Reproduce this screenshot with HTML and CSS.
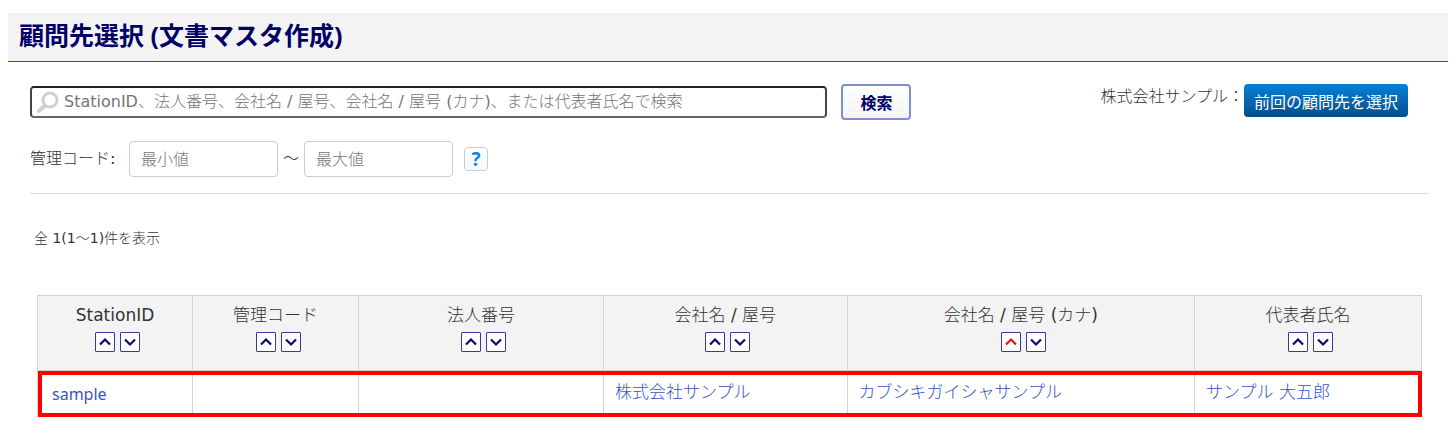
FILE: index.html
```
<!DOCTYPE html>
<html lang="ja">
<head>
<meta charset="utf-8">
<meta name="viewport" content="width=device-width, initial-scale=1">
<title>顧問先選択 (文書マスタ作成)</title>
<link rel="stylesheet" href="styles.css">
</head>
<body>
<svg class="defs" aria-hidden="true">
  <symbol id="up" viewBox="0 0 18 18"><path d="M4 11.5 9 6.5l5 5" fill="none" stroke="currentColor" stroke-width="2.2"/></symbol>
  <symbol id="down" viewBox="0 0 18 18"><path d="M4 6.5l5 5 5-5" fill="none" stroke="currentColor" stroke-width="2.2"/></symbol>
</svg>
<header class="page-header"><h1>顧問先選択 (文書マスタ作成)</h1></header>
<main class="content">
  <form class="filters">
    <div class="search-row">
      <div class="search-box">
        <svg class="search-icon" viewBox="0 0 22 22" aria-hidden="true"><path d="M8.5 14 2 20" fill="none" stroke="#d0d0d0" stroke-width="4" stroke-linecap="round"/><circle cx="13" cy="9" r="7" fill="#fff" stroke="#d0d0d0" stroke-width="3"/></svg>
        <input class="search-input" type="text" aria-label="検索条件" placeholder="StationID、法人番号、会社名 / 屋号、会社名 / 屋号 (カナ)、または代表者氏名で検索">
      </div>
      <button class="search-button" type="submit">検索</button>
      <div class="previous">
        <span>株式会社サンプル：</span>
        <button class="previous-button" type="button">前回の顧問先を選択</button>
      </div>
    </div>
    <div class="code-row">
      <label class="code-label" for="code-min">管理コード:</label>
      <input class="code-input" id="code-min" type="text" placeholder="最小値">
      <span class="tilde">～</span>
      <input class="code-input" type="text" aria-label="管理コード 最大値" placeholder="最大値">
      <button class="help-button" type="button">?</button>
    </div>
  </form>
  <p class="count">全 1(1～1)件を表示</p>
  <table class="clients">
    <colgroup><col class="col-id"><col class="col-code"><col class="col-number"><col class="col-name"><col class="col-kana"><col class="col-owner"></colgroup>
    <thead>
      <tr>
        <th scope="col">StationID<div class="sort"><button type="button" aria-label="昇順"><svg><use href="#up"/></svg></button><button type="button" aria-label="降順"><svg><use href="#down"/></svg></button></div></th>
        <th scope="col">管理コード<div class="sort"><button type="button" aria-label="昇順"><svg><use href="#up"/></svg></button><button type="button" aria-label="降順"><svg><use href="#down"/></svg></button></div></th>
        <th scope="col">法人番号<div class="sort"><button type="button" aria-label="昇順"><svg><use href="#up"/></svg></button><button type="button" aria-label="降順"><svg><use href="#down"/></svg></button></div></th>
        <th scope="col">会社名 / 屋号<div class="sort"><button type="button" aria-label="昇順"><svg><use href="#up"/></svg></button><button type="button" aria-label="降順"><svg><use href="#down"/></svg></button></div></th>
        <th scope="col">会社名 / 屋号 (カナ)<div class="sort"><button class="active" type="button" aria-label="昇順"><svg><use href="#up"/></svg></button><button type="button" aria-label="降順"><svg><use href="#down"/></svg></button></div></th>
        <th scope="col">代表者氏名<div class="sort"><button type="button" aria-label="昇順"><svg><use href="#up"/></svg></button><button type="button" aria-label="降順"><svg><use href="#down"/></svg></button></div></th>
      </tr>
    </thead>
    <tbody>
      <tr class="highlight">
        <td class="station-id"><a href="#">sample</a></td>
        <td></td>
        <td></td>
        <td><a href="#">株式会社サンプル</a></td>
        <td><a href="#">カブシキガイシャサンプル</a></td>
        <td><a href="#">サンプル 大五郎</a></td>
      </tr>
    </tbody>
  </table>
</main>
</body>
</html>
```
FILE: styles.css
```
* { box-sizing: border-box; }
body {
  margin: 0;
  padding: 13px 8px;
  background: #fff;
  color: #333;
  font: 400 16px/24px "DejaVu Sans", "Noto Sans CJK JP Light", "Noto Sans CJK JP", sans-serif;
}
button, input { font: inherit; margin: 0; }
.defs { display: none; }
.page-header {
  padding: 5px 11px 7px;
  background: #f3f3f3;
  border-bottom: 1px solid #4a4a9c;
}
h1 {
  margin: 0;
  color: #006;
  font-family: "Noto Sans", "Noto Sans CJK JP", sans-serif;
  font-size: 25px;
  line-height: 34px;
  padding-bottom: 2px;
  font-weight: 700;
}
.content { padding: 22px 19px 0 22px; }
.filters { padding-bottom: 16px; border-bottom: 1px solid #ddd; }
.search-row { display: flex; align-items: center; }
.search-box { display: grid; width: 57%; align-items: center; }
.search-box > * { grid-area: 1 / 1; }
.search-icon { width: 22px; height: 22px; margin-left: 7px; z-index: 1; pointer-events: none; }
.search-input {
  width: 100%;
  height: 32px;
  padding: 0 8px 2px 32px;
  border: 2px solid #444;
  border-bottom-color: #666;
  border-top-color: #222;
  border-radius: 4px;
  background: #fff;
}
input::placeholder { color: #757575; opacity: 1; }
.search-button {
  width: 70px;
  height: 36px;
  margin-left: 14px;
  padding: 0;
  border: 2px solid #7d8fd0;
  border-radius: 4px;
  background: linear-gradient(#fff, #f3f3f3);
  color: #006;
  font-family: "Noto Sans CJK JP", sans-serif;
  font-weight: 700;
}
.previous { display: flex; align-self: flex-start; margin-left: auto; margin-right: 21px; }
.previous span { padding-top: 1px; }
.previous-button {
  height: 33px;
  padding: 0 10px;
  border: 0;
  border-radius: 4px;
  background: linear-gradient(#0480d8, #034f88);
  color: #fff;
  font-family: "Noto Sans CJK JP", sans-serif;
}
.code-row { display: flex; align-items: center; margin-top: 21px; }
.code-label { width: 99px; }
.code-input {
  width: 149px;
  height: 36px;
  padding: 0 11px;
  border: 1px solid #ccc;
  border-radius: 4px;
  background: #fff;
}
.tilde { width: 26px; text-align: center; }
.help-button {
  width: 24px;
  height: 24px;
  margin-left: 11px;
  padding: 0;
  border: 1px solid #ccc;
  border-radius: 4px;
  background: linear-gradient(#fff, #f2f8fd);
  color: #0b86dc;
  font-family: "Noto Sans", sans-serif;
  font-size: 19px;
  line-height: 22px;
  font-weight: 700;
}
.count { margin: 32px 4px 45px; font-size: 14px; }
.clients {
  width: calc(100% - 14px);
  margin-left: 7px;
  border-collapse: collapse;
  table-layout: fixed;
  font-size: 17px;
}
.col-id { width: 11.2%; }
.col-code { width: 12%; }
.col-number { width: 17.7%; }
.col-name { width: 17.6%; }
.col-kana { width: 25.1%; }
.col-owner { width: 16.4%; }
.clients th {
  height: 75px;
  padding: 7px 4px 16px;
  border: 1px solid #d3d3d3;
  background: #f3f3f3;
  font-weight: 400;
  vertical-align: top;
}
.clients td {
  height: 46px;
  padding: 0 11px 4px;
  border: 1px solid #d3d3d3;
}
.clients .station-id {
  padding: 0 14px;
  font-family: "Noto Sans", sans-serif;
  font-size: 16px;
}
.highlight { outline: 4px solid #f00; outline-offset: -4px; }
.clients a { color: #3555c5; text-decoration: none; }
.sort { display: flex; justify-content: center; gap: 5px; margin-top: 5px; padding-left: 5px; }
.sort button {
  display: flex;
  width: 20px;
  height: 20px;
  padding: 0;
  border: 1px solid #3a3a98;
  border-radius: 1px;
  background: #fff;
  color: #0a0a70;
}
.sort .active { color: #e81010; }
.sort svg { width: 18px; height: 18px; }
```
